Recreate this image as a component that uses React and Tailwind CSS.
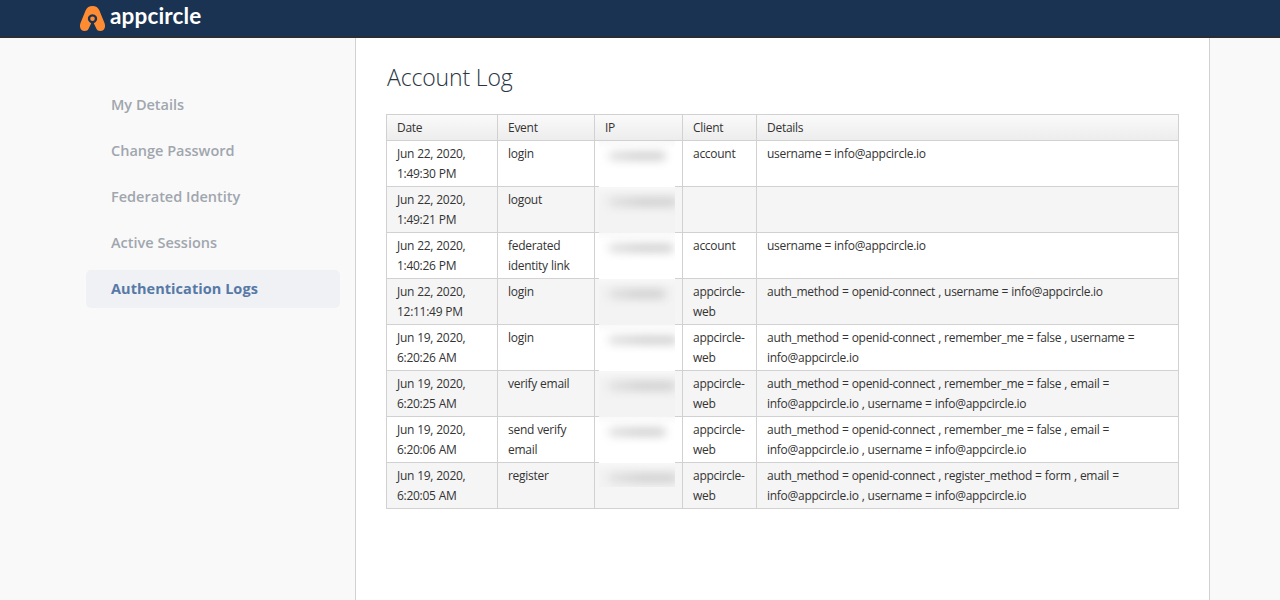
import React from "react";

const NAV = [
  { label: "My Details" },
  { label: "Change Password" },
  { label: "Federated Identity" },
  { label: "Active Sessions" },
  { label: "Authentication Logs", active: true },
];

const MAIL = "info@appcircle.io";
const OPENID = "auth_method = openid-connect , ";

const ROWS = [
  { date: ["Jun 22, 2020,", "1:49:30 PM"], event: ["login"], ip: 56, client: ["account"], details: [`username = ${MAIL}`] },
  { date: ["Jun 22, 2020,", "1:49:21 PM"], event: ["logout"], ip: 68, client: [], details: [] },
  { date: ["Jun 22, 2020,", "1:40:26 PM"], event: ["federated", "identity link"], ip: 64, client: ["account"], details: [`username = ${MAIL}`] },
  { date: ["Jun 22, 2020,", "12:11:49 PM"], event: ["login"], ip: 56, client: ["appcircle-", "web"], details: [`${OPENID}username = ${MAIL}`] },
  { date: ["Jun 19, 2020,", "6:20:26 AM"], event: ["login"], ip: 68, client: ["appcircle-", "web"], details: [`${OPENID}remember_me = false , username =`, MAIL] },
  { date: ["Jun 19, 2020,", "6:20:25 AM"], event: ["verify email"], ip: 66, client: ["appcircle-", "web"], details: [`${OPENID}remember_me = false , email =`, `${MAIL} , username = ${MAIL}`] },
  { date: ["Jun 19, 2020,", "6:20:06 AM"], event: ["send verify", "email"], ip: 56, client: ["appcircle-", "web"], details: [`${OPENID}remember_me = false , email =`, `${MAIL} , username = ${MAIL}`] },
  { date: ["Jun 19, 2020,", "6:20:05 AM"], event: ["register"], ip: 68, client: ["appcircle-", "web"], details: [`${OPENID}register_method = form , email =`, `${MAIL} , username = ${MAIL}`] },
];

function Logo() {
  return (
    <div className="flex h-[38px] items-start pt-1.5">
      <svg width="25" height="25" viewBox="0 0 25 25" aria-hidden="true">
        <path
          d="M12.5 0C9.2 0 7 1.5 5.6 4.4L.6 16.8C-1.2 21.4 1 25 4.8 25C6.6 25 7.8 24.4 8.7 22.6L11.2 17.2A4.6 4.6 0 1 1 13.8 17.2L16.3 22.6C17.2 24.4 18.4 25 20.2 25C24 25 26.2 21.4 24.4 16.8L19.4 4.4C18 1.5 15.8 0 12.5 0Z"
          fill="#ff8c32"
        />
        <circle cx="12.5" cy="12.8" r="2.3" fill="#ff8c32" />
      </svg>
      <span className="ml-[5px] -mt-[3px] font-[Lato,sans-serif] text-[22.5px] leading-[26px] font-bold tracking-[0.15px] text-white">
        appcircle
      </span>
    </div>
  );
}

function Cell({ lines }) {
  return (
    <td className="border-r border-b border-[#d1d1d1] px-2.5 pt-[3px] align-top">
      {lines.map((line) => (
        <div key={line} className="h-5 whitespace-nowrap">{line}</div>
      ))}
    </td>
  );
}

function MaskedCell({ width, shaded, last }) {
  return (
    <td className="relative border-r border-b border-[#d1d1d1] p-0">
      <div
        className={`absolute left-1 top-0 w-[76px] overflow-hidden ${last ? "h-6" : "h-[46px]"} ${
          shaded
            ? "bg-linear-to-b from-[#f7f7f7] to-[#f3f3f3] to-[8px]"
            : "bg-linear-to-b from-[#f9f9f9] to-white to-[8px]"
        }`}
      >
        <div className="mt-[11px] ml-2.5 h-2 bg-linear-to-r from-[#dedede] via-[#cacaca] to-[#cccccc] blur-[5px]" style={{ width }} />
      </div>
    </td>
  );
}

export default function App() {
  return (
    <div className="flex h-[600px] w-[1280px] flex-col overflow-hidden bg-[#f9f9f9] font-['Open_Sans','Noto_Sans',sans-serif] text-[#333]">
      <header className="h-[38px] shrink-0 border-b-2 border-[#292e34] bg-[#1a3353] pl-20">
        <Logo />
      </header>
      <div className="flex flex-1">
        <nav className="flex w-[355px] flex-col gap-2 pt-12 pl-[86px]">
          {NAV.map((item) => (
            <a
              key={item.label}
              className={`flex h-[38px] w-[254px] items-center rounded-[5px] pl-[25px] text-[14.5px] whitespace-nowrap ${
                item.active ? "bg-[#eff1f5] font-bold tracking-[0.05px] text-[#5779a6]" : "font-semibold text-[#a0a6ae]"
              }`}
            >
              {item.label}
            </a>
          ))}
        </nav>
        <main className="w-[855px] border-x border-[#d1d1d1] bg-white pl-[30px]">
          <h1 className="mt-[23px] ml-px h-[33px] text-[23px] leading-8 font-light tracking-[-0.15px] text-[#2b3542]">Account Log</h1>
          <table className="mt-5 w-[793px] table-fixed border-separate border-spacing-0 border-t border-l border-[#d1d1d1] text-[12px] leading-5 tracking-[-0.28px] [word-spacing:0.25px]">
            <colgroup>
              <col className="w-[111px]" />
              <col className="w-[97px]" />
              <col className="w-[88px]" />
              <col className="w-[74px]" />
              <col className="w-[422px]" />
            </colgroup>
            <thead>
              <tr className="h-[26px]">
                {["Date", "Event", "IP", "Client", "Details"].map((name) => (
                  <th key={name} className="border-r border-b border-[#d1d1d1] bg-linear-to-b from-[#fafafa] to-[#ededed] px-2.5 py-0 text-left font-normal">
                    {name}
                  </th>
                ))}
              </tr>
            </thead>
            <tbody>
              {ROWS.map((row, i) => (
                <tr key={row.date[1]} className={`h-[46px] ${i % 2 ? "bg-[#f5f5f5]" : "bg-white"}`}>
                  <Cell lines={row.date} />
                  <Cell lines={row.event} />
                  <MaskedCell width={row.ip} shaded={i % 2 === 1} last={i === ROWS.length - 1} />
                  <Cell lines={row.client} />
                  <Cell lines={row.details} />
                </tr>
              ))}
            </tbody>
          </table>
        </main>
      </div>
    </div>
  );
}
